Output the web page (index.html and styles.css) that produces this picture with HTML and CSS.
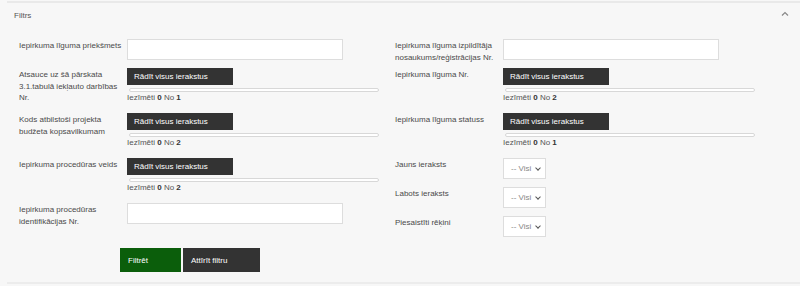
FILE: index.html
```html
<!DOCTYPE html>
<html lang="lv">
<head>
    <meta charset="UTF-8">
    <meta name="viewport" content="width=device-width, initial-scale=1.0">
    <title>Filtrs</title>
    <link rel="stylesheet" href="styles.css">
</head>
<body>
    <div class="filter-panel">
        <div class="panel-header">
            <span class="panel-title">Filtrs</span>
            <svg class="collapse-icon" width="8" height="6" viewBox="0 0 8 6" fill="none" stroke="#888" stroke-width="1.2">
                <polyline points="1,4.5 4,1.5 7,4.5"></polyline>
            </svg>
        </div>
        <div class="panel-body">
            <div class="filter-columns">
                <div class="filter-column">
                    <div class="form-group">
                        <label class="form-label">Iepirkuma līguma priekšmets</label>
                        <div class="form-field"><input type="text" class="text-input"></div>
                    </div>
                    <div class="form-group">
                        <label class="form-label">Atsauce uz šā pārskata 3.1.tabulā iekļauto darbības Nr.</label>
                        <div class="form-field">
                            <button class="multi-button">Rādīt visus ierakstus</button>
                            <div class="multi-track"></div>
                            <div class="multi-count">Iezīmēti <b>0</b> No <b>1</b></div>
                        </div>
                    </div>
                    <div class="form-group">
                        <label class="form-label">Kods atbilstoši projekta budžeta kopsavilkumam</label>
                        <div class="form-field">
                            <button class="multi-button">Rādīt visus ierakstus</button>
                            <div class="multi-track"></div>
                            <div class="multi-count">Iezīmēti <b>0</b> No <b>2</b></div>
                        </div>
                    </div>
                    <div class="form-group">
                        <label class="form-label">Iepirkuma procedūras veids</label>
                        <div class="form-field">
                            <button class="multi-button">Rādīt visus ierakstus</button>
                            <div class="multi-track"></div>
                            <div class="multi-count">Iezīmēti <b>0</b> No <b>2</b></div>
                        </div>
                    </div>
                    <div class="form-group">
                        <label class="form-label">Iepirkuma procedūras identifikācijas Nr.</label>
                        <div class="form-field"><input type="text" class="text-input"></div>
                    </div>
                </div>
                <div class="filter-column">
                    <div class="form-group">
                        <label class="form-label">Iepirkuma līguma izpildītāja nosaukums/reģistrācijas Nr.</label>
                        <div class="form-field"><input type="text" class="text-input"></div>
                    </div>
                    <div class="form-group">
                        <label class="form-label">Iepirkuma līguma Nr.</label>
                        <div class="form-field">
                            <button class="multi-button">Rādīt visus ierakstus</button>
                            <div class="multi-track"></div>
                            <div class="multi-count">Iezīmēti <b>0</b> No <b>2</b></div>
                        </div>
                    </div>
                    <div class="form-group">
                        <label class="form-label">Iepirkuma līguma statuss</label>
                        <div class="form-field">
                            <button class="multi-button">Rādīt visus ierakstus</button>
                            <div class="multi-track"></div>
                            <div class="multi-count">Iezīmēti <b>0</b> No <b>1</b></div>
                        </div>
                    </div>
                    <div class="form-group">
                        <label class="form-label">Jauns ieraksts</label>
                        <div class="form-field">
                            <div class="select-box">-- Visi <span class="select-arrow"></span></div>
                        </div>
                    </div>
                    <div class="form-group">
                        <label class="form-label">Labots ieraksts</label>
                        <div class="form-field">
                            <div class="select-box">-- Visi <span class="select-arrow"></span></div>
                        </div>
                    </div>
                    <div class="form-group">
                        <label class="form-label">Piesaistīti rēķini</label>
                        <div class="form-field">
                            <div class="select-box">-- Visi <span class="select-arrow"></span></div>
                        </div>
                    </div>
                </div>
            </div>
            <div class="form-actions">
                <button class="btn btn-green">Filtrēt</button>
                <button class="btn btn-dark">Attīrīt filtru</button>
            </div>
        </div>
    </div>
</body>
</html>
```

FILE: styles.css
```css
:root {
    --background-color: #f7f7f7;
    --text-color: #4a4a4a;
    --border-color: #e2e2e2;
    --dark-color: #333333;
    --green-color: #0b5e0b;
}

body {
    font-family: 'Liberation Sans', Arial, sans-serif;
    font-size: 8px;
    margin: 0;
    padding: 1px 0 0 7px;
    background-color: var(--background-color);
    color: var(--text-color);
}

.filter-panel {
    border-top: 2px solid #e9e9e9;
    border-bottom: 2px solid #ececec;
    height: 283px;
    box-sizing: border-box;
}

.panel-header {
    display: flex;
    justify-content: space-between;
    align-items: center;
    padding: 5px 11px 0 7px;
    height: 14px;
}

.panel-title {
    font-size: 8px;
    color: #555;
}

.collapse-icon {
    margin-top: -3px;
}

.panel-body {
    padding: 17px 0 0 12px;
}

.filter-columns {
    display: flex;
}

.filter-column {
    width: 376px;
}

.form-group {
    display: flex;
    align-items: flex-start;
    margin-bottom: 8px;
}

/* labels may run a bit past the field, as in the original form */
.form-label {
    width: 104px;
    margin-right: 4px;
    margin-bottom: -6px;
    padding-top: 1px;
    line-height: 11.5px;
    font-size: 8px;
}

.form-field {
    flex: 1;
}

.text-input {
    display: block;
    width: 216px;
    height: 21px;
    box-sizing: border-box;
    border: 1px solid #ddd;
    background-color: #fff;
    margin: 0;
}

.multi-button {
    display: block;
    width: 106px;
    height: 17px;
    background-color: var(--dark-color);
    color: #fff;
    border: none;
    padding: 0 0 0 7px;
    text-align: left;
    font-family: inherit;
    font-size: 8px;
}

.multi-track {
    width: 250px;
    height: 4px;
    box-sizing: border-box;
    margin: 3px 0 0 2px;
    border: 1px solid #d8d8d8;
    border-radius: 2px;
    background-color: #fff;
}

.multi-count {
    margin: 0 0 2px;
    line-height: 11px;
    color: #555;
}

.multi-count b {
    color: #333;
}

.select-box {
    display: flex;
    align-items: center;
    justify-content: space-between;
    width: 43px;
    height: 21px;
    box-sizing: border-box;
    padding: 0 5px 0 7px;
    background-color: #fff;
    border: 1px solid #ddd;
    color: #888;
}

.select-arrow {
    width: 3px;
    height: 3px;
    border-right: 1px solid #555;
    border-bottom: 1px solid #555;
    transform: rotate(45deg);
    margin-top: -2px;
}

.form-actions {
    display: flex;
    gap: 2px;
    padding: 3px 0 0 101px;
}

.btn {
    height: 24px;
    border: none;
    color: #fff;
    font-family: inherit;
    font-size: 8px;
    text-align: left;
    padding: 0 8px;
}

.btn-green {
    width: 61px;
    background-color: var(--green-color);
}

.btn-dark {
    width: 77px;
    background-color: var(--dark-color);
}
```
